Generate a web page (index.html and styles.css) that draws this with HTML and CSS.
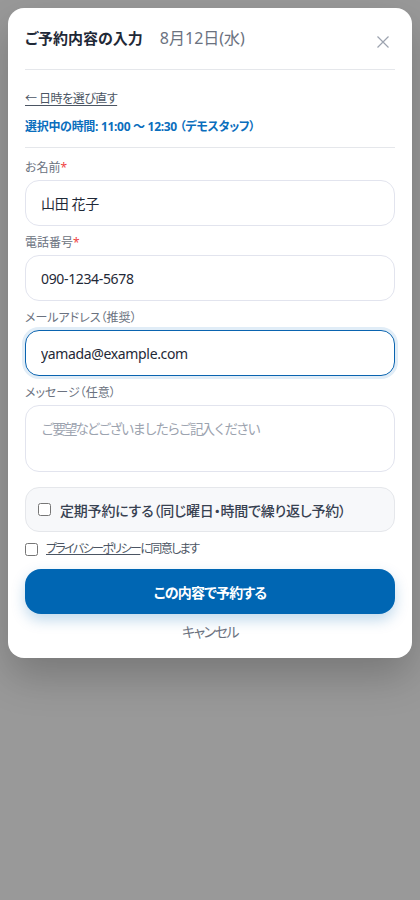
FILE: index.html
```html
<!DOCTYPE html>
<html lang="ja">
<head>
<meta charset="utf-8">
<title>ご予約内容の入力</title>
<link rel="stylesheet" href="styles.css">
</head>
<body>
<div class="overlay">
  <div class="modal">
    <div class="header">
      <div class="heading">
        <span class="title">ご予約内容の入力</span>
        <span class="date">8月12日(水)</span>
      </div>
      <button class="close" aria-label="閉じる">
        <svg width="12" height="12" viewBox="0 0 12 12"><path d="M0.5 0.5L11.5 11.5M11.5 0.5L0.5 11.5" stroke="#9ca3af" stroke-width="1.2" fill="none"/></svg>
      </button>
    </div>

    <div class="slot">
      <a class="back" href="#">← 日時を選び直す</a>
      <div class="selected">選択中の時間: 11:00 〜 12:30 （デモスタッフ）</div>
    </div>

    <form class="form">
      <div class="field">
        <label class="label">お名前<span class="req">*</span></label>
        <input class="input" type="text" value="山田 花子">
      </div>
      <div class="field">
        <label class="label">電話番号<span class="req">*</span></label>
        <input class="input" type="text" value="090-1234-5678">
      </div>
      <div class="field">
        <label class="label">メールアドレス（推奨）</label>
        <input class="input focus" type="text" value="yamada@example.com">
      </div>
      <div class="field">
        <label class="label">メッセージ（任意）</label>
        <textarea class="input textarea" placeholder="ご要望などございましたらご記入ください"></textarea>
      </div>

      <label class="recurring">
        <input type="checkbox" class="check">
        <span>定期予約にする（同じ曜日・時間で繰り返し予約）</span>
      </label>

      <label class="privacy">
        <input type="checkbox" class="check">
        <span><a href="#" class="policy">プライバシーポリシー</a>に同意します</span>
      </label>

      <button type="button" class="submit">この内容で予約する</button>
      <div class="cancel">キャンセル</div>
    </form>
  </div>
</div>
</body>
</html>
```

FILE: styles.css
```css
* { box-sizing: border-box; }

html, body {
  margin: 0;
  padding: 0;
}

body {
  background: #999999;
  font-family: "Noto Sans", "Noto Sans CJK JP", sans-serif;
  font-feature-settings: "palt";
  color: #1f2937;
  min-height: 900px;
}

.overlay {
  padding: 8px;
}

.modal {
  background: #ffffff;
  border-radius: 16px;
  padding: 20px 17px 16px;
  box-shadow: 0 18px 40px rgba(0, 0, 0, 0.22);
}

.header {
  display: flex;
  align-items: flex-start;
  justify-content: space-between;
  padding-bottom: 21px;
  border-bottom: 1px solid #e5e7eb;
}

.heading {
  display: flex;
  align-items: center;
  height: 20px;
}

.title {
  font-size: 15px;
  font-weight: 700;
  color: #1f2937;
  line-height: 20px;
}

.date {
  font-size: 16px;
  color: #6b7280;
  margin-left: 17px;
  line-height: 20px;
}

.close {
  width: 24px;
  height: 24px;
  border: none;
  background: none;
  padding: 0;
  margin: 2px 0 -6px;
  display: flex;
  align-items: center;
  justify-content: center;
}

.slot {
  margin-top: 20px;
  padding-bottom: 11px;
  border-bottom: 1px solid #e5e7eb;
}

.back {
  display: block;
  font-size: 12px;
  line-height: 18px;
  color: #4b5563;
  text-decoration: underline;
  text-underline-offset: 2px;
  letter-spacing: -0.5px;
}

.selected {
  margin-top: 10px;
  font-size: 12px;
  line-height: 18px;
  font-weight: 700;
  color: #0a6ebd;
  letter-spacing: -0.3px;
}

.form {
  margin-top: 12px;
  display: flex;
  flex-direction: column;
}

.field {
  display: flex;
  flex-direction: column;
  margin-bottom: 9px;
}

.label {
  font-size: 12px;
  line-height: 16px;
  color: #6b7280;
  margin-bottom: 4px;
}

.req {
  color: #ef4444;
}

.input {
  height: 46px;
  width: 100%;
  border: 1px solid #e2e4ee;
  border-radius: 14px;
  padding: 0 15px;
  font-family: inherit;
  font-size: 14px;
  letter-spacing: -0.35px;
  color: #1f2937;
  background: #fff;
  outline: none;
}

.input.focus {
  border-color: #0a64b0;
  box-shadow: 0 0 0 3px rgba(10, 110, 189, 0.12);
}

.textarea {
  height: 67px;
  padding: 13px 15px;
  resize: none;
  line-height: 20px;
}

.textarea::placeholder {
  color: #9ca3af;
  font-size: 13.5px;
  letter-spacing: -2px;
}

.recurring {
  margin-top: 6px;
  height: 45px;
  display: flex;
  align-items: center;
  gap: 9px;
  padding: 0 12px;
  background: #f7f8fa;
  border: 1px solid #e5e7eb;
  border-radius: 14px;
  font-size: 14px;
  font-weight: 500;
  color: #374151;
  letter-spacing: -0.2px;
}

.check {
  width: 13px;
  height: 13px;
  margin: 0;
  flex: none;
}

.privacy {
  margin-top: 8px;
  display: flex;
  align-items: center;
  gap: 8px;
  font-size: 12px;
  line-height: 18px;
  color: #4b5563;
  letter-spacing: -1.6px;
}

.policy {
  color: #4b5563;
  text-decoration: underline;
}

.submit {
  margin-top: 11px;
  height: 45px;
  border: none;
  border-radius: 16px;
  background: #0066b3;
  color: #ffffff;
  font-family: inherit;
  font-feature-settings: "palt";
  font-size: 14px;
  font-weight: 700;
  letter-spacing: -0.8px;
  box-shadow: 0 6px 14px rgba(0, 102, 179, 0.25);
}

.cancel {
  margin-top: 8px;
  text-align: center;
  font-size: 14px;
  line-height: 20px;
  color: #6b7280;
  letter-spacing: -1.5px;
}
```
